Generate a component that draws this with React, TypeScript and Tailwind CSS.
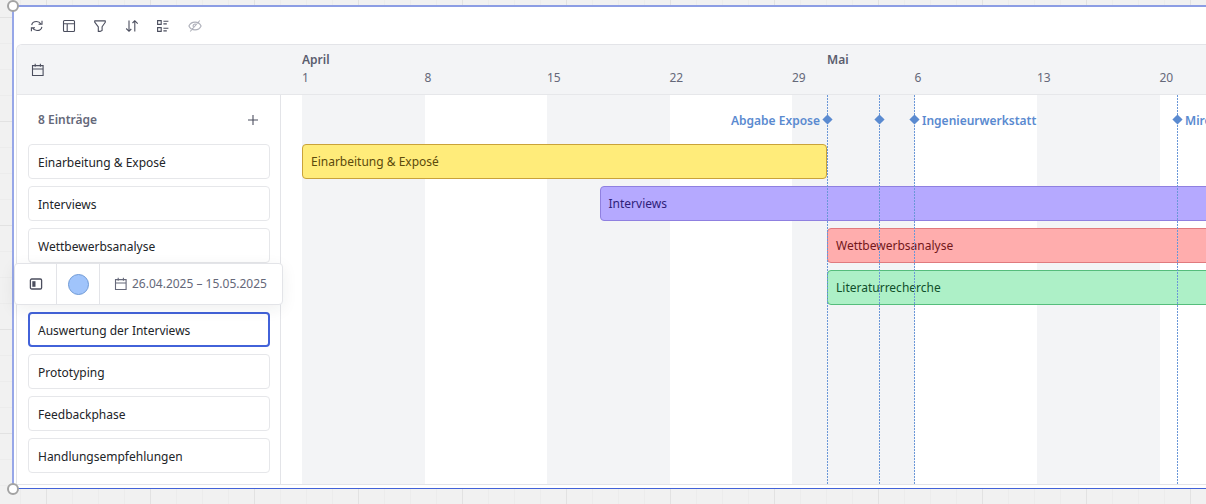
import type { ReactNode } from "react";

const DAY = 35 / 2;
const TOTAL_DAYS = 70;

type Entry = {
  title: string;
  start?: number;
  end?: number;
  tone?: string;
  selected?: boolean;
  covered?: boolean;
};

const entries: Entry[] = [
  { title: "Einarbeitung & Exposé", start: 0, end: 30, tone: "border-[#c9a23a] bg-[#ffec7a] text-[#5c4a0c]" },
  { title: "Interviews", start: 17, end: 70, tone: "border-[#8f80e0] bg-[#b5a9ff] text-[#2f1f7a]" },
  { title: "Wettbewerbsanalyse", start: 30, end: 70, tone: "border-[#e07a7e] bg-[#ffadad] text-[#73171b]" },
  {
    title: "Literaturrecherche",
    start: 30,
    end: 70,
    tone: "border-[#55bd7c] bg-[#adf0c7] text-[#0f4f2a]",
    covered: true,
  },
  { title: "Auswertung der Interviews", selected: true },
  { title: "Prototyping" },
  { title: "Feedbackphase" },
  { title: "Handlungsempfehlungen" },
];

const months = [
  { name: "April", days: 30 },
  { name: "Mai", days: 31 },
];

const weeks = ["1", "8", "15", "22", "29", "6", "13", "20"];

const milestones = [
  { day: 30, label: "Abgabe Expose", side: "left" },
  { day: 33, label: "", side: "right" },
  { day: 35, label: "Ingenieurwerkstatt", side: "right" },
  { day: 50, label: "Miro", side: "right" },
];

function Icon({ children }: { children: ReactNode }) {
  return (
    <svg
      viewBox="0 0 14 14"
      className="size-[14px]"
      fill="none"
      stroke="currentColor"
      strokeWidth="1.1"
      aria-hidden="true"
    >
      {children}
    </svg>
  );
}

const CalendarIcon = () => (
  <Icon>
    <path d="M1.5 2.6h10.600v9.900H1.500zM1.500 6h10.600M4.200 0.800v3M9.400 0.800v3" />
  </Icon>
);

const tools = [
  {
    label: "Aktualisieren",
    icon: (
      <Icon>
        <path d="M1.700 6.200C2.100 3.800 4.100 2.500 6.500 2.500c1.900 0 3.500 1 4.500 2.600M12 1.800v3.500H8.500M11.900 7.800c-.4 2.400-2.500 3.700-4.900 3.700-1.900 0-3.500-1-4.500-2.600M1.400 12.200V8.700H5" />
      </Icon>
    ),
  },
  {
    label: "Layout",
    icon: (
      <Icon>
        <rect x="1.500" y="1.500" width="11" height="11" rx="1" />
        <path d="M1.500 4.700h11M5.200 4.700v7.800" />
      </Icon>
    ),
  },
  {
    label: "Filtern",
    icon: (
      <Icon>
        <path d="M1.700 1.900h10.600v1.300L9.100 7.800v3.700L6.900 12.400H5.300V7.800L1.700 3.200z" strokeLinejoin="round" />
      </Icon>
    ),
  },
  {
    label: "Sortieren",
    icon: (
      <Icon>
        <path d="M4 1.500v10.800M1.200 9.500L4 12.300l2.300-2.300M9.800 12.500V1.700M7.500 4l2.300-2.300 2.900 2.900" />
      </Icon>
    ),
  },
  {
    label: "Gruppieren",
    icon: (
      <Icon>
        <path d="M1.600 1.600h3.600v3.800H1.600zM1.600 8.600h3.600v3.800H1.600zM7.400 2.200h5M7.400 4.900h3.400M7.400 9.200h5M7.400 11.900h3.400" />
      </Icon>
    ),
  },
];

function Handle({ className }: { className: string }) {
  return (
    <span
      className={`absolute -left-[7px] z-20 size-3 rounded-full border-2 border-[#a3a3a3] bg-white ${className}`}
    />
  );
}

export default function App() {
  return (
    <main className="min-h-screen overflow-hidden bg-[#f1f1f1] bg-[linear-gradient(to_right,#e2e2e2_1px,transparent_1px),linear-gradient(to_bottom,#e2e2e2_1px,transparent_1px),linear-gradient(to_right,#ececec_1px,transparent_1px),linear-gradient(to_bottom,#ececec_1px,transparent_1px)] bg-[size:104px_104px,104px_104px,26px_26px,26px_26px] bg-[position:46px_17px,46px_17px,20px_17px,20px_17px] pt-[5px] pb-[15px] pl-3 font-['Noto_Sans',sans-serif] text-xs text-[#222428]">
      <div className="relative border-t-2 border-b border-l-2 border-t-[#8c9de4] border-b-[#4262d9] border-l-[#97a7e8] bg-white pb-[3px] pl-[2px]">
        <Handle className="-top-[7px]" />
        <Handle className="-bottom-[7px]" />

        <div className="flex h-[37px] w-[186px] items-center justify-between pl-[14px] text-[#4b4e5e]">
          {tools.map((tool) => (
            <button key={tool.label} type="button" aria-label={tool.label}>
              {tool.icon}
            </button>
          ))}
          <button type="button" aria-label="Ausgeblendete Felder" className="text-[#aeb0ba]">
            <Icon>
              <path d="M0.900 7c1.100-2.500 3.300-3.900 6.100-3.900S12 4.500 13.100 7c-1.100 2.500-3.300 3.900-6.100 3.900S2 9.500 0.900 7zM11.800 1.500L2.200 12.500M5.300 7.900a2 2 0 0 1 2.600-2.700" />
            </Icon>
          </button>
        </div>

        <section className="overflow-hidden rounded-tl-md border-t border-b border-l border-[#e3e4e8]">
          <header className="flex h-[50px] border-b border-[#e6e7ea] bg-[#f3f4f6] text-[#656879]">
            <div className="flex w-[285px] shrink-0 items-center pl-[14px] text-[#4b4e5e]">
              <CalendarIcon />
            </div>
            <div className="min-w-0 flex-1 overflow-hidden pt-[6px] leading-[18px]">
              <div className="flex font-semibold text-[#5a5d6e]">
                {months.map((month) => (
                  <span key={month.name} className="shrink-0" style={{ width: month.days * DAY }}>
                    {month.name}
                  </span>
                ))}
              </div>
              <div className="flex">
                {weeks.map((week) => (
                  <span key={week} className="shrink-0" style={{ width: 7 * DAY }}>
                    {week}
                  </span>
                ))}
              </div>
            </div>
          </header>

          <div className="flex">
            <aside className="w-[264px] shrink-0 border-r border-[#e3e4e8] pr-[10px] pb-[11px] pl-[11px]">
              <div className="flex h-[49px] items-center justify-between px-[10px] pt-px">
                <h2 className="font-semibold text-[#656879]">8 Einträge</h2>
                <button type="button" aria-label="Eintrag hinzufügen" className="text-[#4b4e5e]">
                  <Icon>
                    <path d="M7 2v10M2 7h10" />
                  </Icon>
                </button>
              </div>
              <ul className="flex flex-col gap-[7px]">
                {entries.map((entry) => (
                  <li key={entry.title}>
                    <button
                      type="button"
                      className={`flex h-[35px] w-full items-center rounded bg-white pt-[2px] text-left ${
                        entry.selected ? "border-2 border-[#4262d9] px-2" : "border border-[#e6e7ea] px-[9px]"
                      }`}
                    >
                      {!entry.covered && entry.title}
                    </button>
                  </li>
                ))}
              </ul>
            </aside>

            <div className="grid min-w-0 flex-1 overflow-hidden pl-[21px]">
              <div className="col-start-1 row-start-1 flex min-w-0">
                {Array.from({ length: TOTAL_DAYS / 7 }, (_, i) => (
                  <div
                    key={i}
                    className={i % 2 === 0 ? "shrink-0 bg-[#f3f4f6]" : "shrink-0"}
                    style={{ width: 7 * DAY }}
                  />
                ))}
              </div>

              <div className="col-start-1 row-start-1 flex min-w-0 flex-col gap-[7px] pt-[49px]">
                {entries
                  .filter((entry) => entry.tone)
                  .map((entry) => (
                    <button
                      key={entry.title}
                      type="button"
                      className={`h-[35px] rounded border px-2 text-left ${entry.tone}`}
                      style={{
                        marginLeft: entry.start! * DAY,
                        width: (entry.end! - entry.start!) * DAY,
                      }}
                    >
                      {entry.title}
                    </button>
                  ))}
              </div>

              <div className="pointer-events-none relative col-start-1 row-start-1 min-w-0 font-semibold text-[#5a8ad0]">
                {milestones.map((m) => (
                  <div
                    key={m.day}
                    className="absolute inset-y-0 w-px bg-[repeating-linear-gradient(to_bottom,#6a97d8_0px,#6a97d8_2px,transparent_2px,transparent_3px)]"
                    style={{ left: Math.floor(m.day * DAY) }}
                  >
                    <svg viewBox="0 0 11 11" className="absolute top-[19px] -left-[5px] size-[11px]" aria-hidden="true">
                      <path d="M5.500 0.400L10.600 5.500L5.500 10.600L0.400 5.500z" fill="#5a8ad0" />
                    </svg>
                    {m.label && (
                      <span
                        className={`absolute top-4 leading-5 whitespace-nowrap ${
                          m.side === "left" ? "right-2" : "left-2"
                        }`}
                      >
                        {m.label}
                      </span>
                    )}
                  </div>
                ))}
              </div>
            </div>
          </div>
        </section>

        <div className="absolute top-[256px] left-0 z-10 flex h-[42px] divide-x divide-[#e3e4e8] rounded border border-[#e3e4e8] bg-white text-[#656879] shadow-[0_4px_16px_rgba(34,36,40,0.07)]">
          <button type="button" aria-label="Details öffnen" className="flex w-[42px] items-center justify-center text-[#4b4e5e]">
            <Icon>
              <rect x="1.400" y="2" width="11.200" height="10" rx="1.300" strokeWidth="1.300" />
              <path d="M3.300 4.200h3.200v5.600H3.300z" fill="currentColor" stroke="none" />
            </Icon>
          </button>
          <button type="button" aria-label="Farbe" className="flex w-[43px] items-center justify-center">
            <span className="size-[21px] rounded-full border border-[#6f9ad6] bg-[#a0c4fb]" />
          </button>
          <button type="button" className="flex items-center gap-1 pr-[15px] pl-[14px] whitespace-nowrap">
            <CalendarIcon />
            26.04.2025 – 15.05.2025
          </button>
        </div>
      </div>
    </main>
  );
}
